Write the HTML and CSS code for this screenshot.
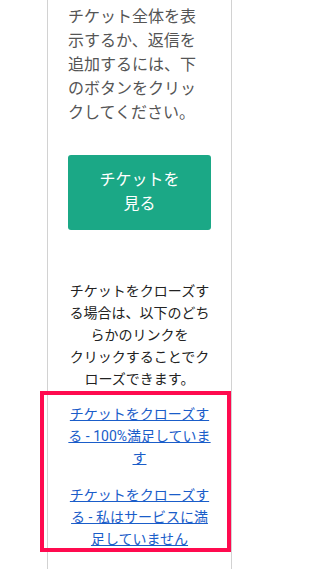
FILE: index.html
```html
<!DOCTYPE html>
<html lang="ja">
<head>
<meta charset="utf-8">
<link rel="stylesheet" href="styles.css">
</head>
<body>
<div class="column">
  <p class="intro">チケット全体を表示するか、返信を追加するには、下のボタンをクリックしてください。</p>
  <a class="button" href="#">チケットを見る</a>
  <p class="close-note">チケットをクローズする場合は、以下のどちらかのリンクを<br>クリックすることでクローズできます。</p>
  <div class="links">
    <p class="link-row"><a href="#">チケットをクローズする - 100%満足しています</a></p>
    <p class="link-row"><a href="#">チケットをクローズする - 私はサービスに満足していません</a></p>
  </div>
</div>
</body>
</html>
```
FILE: styles.css
```css
html, body {
  margin: 0;
  padding: 0;
  background: #ffffff;
  height: 100%;
}
body {
  font-family: Roboto, "Noto Sans CJK JP", sans-serif;
}
.column {
  box-sizing: border-box;
  margin-left: 47px;
  width: 185px;
  min-height: 100%;
  border-left: 1px solid #d2d2d2;
  border-right: 1px solid #d2d2d2;
  padding: 5px 20px 20px;
}
.intro {
  margin: 0;
  font-size: 16px;
  line-height: 24px;
  color: #555555;
}
.button {
  display: block;
  margin-top: 30px;
  padding: 13px 25px 14px;
  background: #1ba886;
  border-radius: 3px;
  color: #ffffff;
  text-align: center;
  text-decoration: none;
  font-size: 16px;
  line-height: 24px;
}
.close-note {
  margin: 50px 0 0;
  font-size: 14px;
  line-height: 22px;
  color: #222222;
  text-align: center;
}
.links {
  position: relative;
  margin-top: 13px;
}
.links::before {
  content: "";
  position: absolute;
  left: -28px;
  right: -20px;
  top: -12px;
  bottom: -2px;
  border: 4px solid #ff0a4f;
  pointer-events: none;
}
.link-row {
  margin: 0;
  font-size: 14px;
  line-height: 22px;
  text-align: center;
}
.link-row + .link-row {
  margin-top: 15px;
}
.link-row a {
  color: #1a5dc9;
  text-decoration: underline;
}
```
